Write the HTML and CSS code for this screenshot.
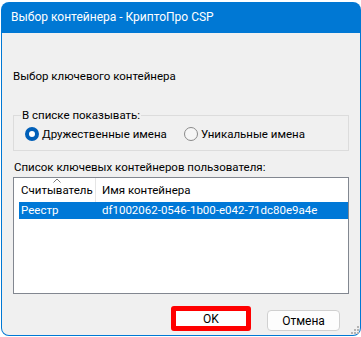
FILE: index.html
```html
<!DOCTYPE html>
<html lang="ru">
<head>
    <meta charset="UTF-8">
    <title>Выбор контейнера - КриптоПро CSP</title>
    <link rel="stylesheet" href="styles.css">
</head>
<body>
    <div class="window">
        <div class="titlebar">Выбор контейнера - КриптоПро CSP</div>
        <div class="client">
            <p class="caption">Выбор ключевого контейнера</p>

            <fieldset class="group">
                <legend>В списке показывать:</legend>
                <div class="radios">
                    <label class="radio radio-first"><span class="dot checked"></span>Дружественные имена</label>
                    <label class="radio"><span class="dot"></span>Уникальные имена</label>
                </div>
            </fieldset>

            <p class="list-label">Список ключевых контейнеров пользователя:</p>
            <div class="listview">
                <div class="lv-header">
                    <div class="col col-reader">
                        <svg class="sort" width="8" height="5" viewBox="0 0 8 5"><path d="M0.5 4.5 L4 1 L7.5 4.5" fill="none" stroke="#7a7a7a" stroke-width="1"/></svg>
                        Считыватель
                    </div>
                    <div class="col col-name">Имя контейнера</div>
                </div>
                <div class="lv-row selected">
                    <div class="col col-reader">Реестр</div>
                    <div class="col col-name">df1002062-0546-1b00-e042-71dc80e9a4e</div>
                </div>
            </div>

            <div class="buttons">
                <button class="btn btn-ok">OK</button>
                <button class="btn">Отмена</button>
            </div>

            <svg class="grip" width="9" height="9" viewBox="0 0 9 9">
                <rect x="7" y="1" width="2" height="2" fill="#b4b4b4"/>
                <rect x="4" y="4" width="2" height="2" fill="#b4b4b4"/>
                <rect x="7" y="4" width="2" height="2" fill="#b4b4b4"/>
                <rect x="1" y="7" width="2" height="2" fill="#b4b4b4"/>
                <rect x="4" y="7" width="2" height="2" fill="#b4b4b4"/>
                <rect x="7" y="7" width="2" height="2" fill="#b4b4b4"/>
            </svg>
        </div>
    </div>
</body>
</html>
```

FILE: styles.css
```css
body {
    margin: 0;
    background-color: #ffffff;
    font-family: Roboto, "Noto Sans", sans-serif;
    font-size: 11.5px;
    line-height: 16px;
    color: #000;
}

.window {
    margin: 2px 0 0 1px;
    width: 360px;
    height: 334px;
    background-color: #0078d4;
    border-radius: 8px;
    display: flex;
    flex-direction: column;
    overflow: hidden;
}

.titlebar {
    height: 31px;
    padding-left: 10px;
    font-size: 12px;
    line-height: 30px;
    color: #fff;
    flex-shrink: 0;
}

.client {
    position: relative;
    flex: 1;
    margin: 0 1px 1px 1px;
    padding: 0 11px;
    background-color: #f0f0f0;
    border-radius: 0 0 7px 7px;
    display: flex;
    flex-direction: column;
}

.caption {
    margin: 35px 0 0 0;
}

.group {
    margin: 23px 0 0 0;
    padding: 3px 0 8px 8px;
    border: 1px solid #dcdcdc;
}

.group legend {
    padding: 0 1px;
    margin-left: -1px;
}

.radios {
    display: flex;
}

.radio {
    flex: none;
    display: flex;
    align-items: center;
    gap: 3px;
}

.radio-first {
    width: 159px;
    margin-left: 3px;
}

.dot {
    box-sizing: border-box;
    width: 14px;
    height: 14px;
    border-radius: 50%;
    border: 1px solid #8a8a8a;
    background-color: #f6f6f6;
}

.dot.checked {
    border: 4px solid #005fb8;
    background-color: #fff;
}

.list-label {
    margin: 8px 0 0 1px;
}

.listview {
    margin-top: 2px;
    height: 115px;
    border: 1px solid #828790;
    background-color: #fff;
    padding-left: 5px;
}

.lv-header,
.lv-row {
    display: flex;
}

.lv-header {
    height: 24px;
    align-items: center;
}

.lv-header .col-reader {
    position: relative;
    align-self: stretch;
    display: flex;
    align-items: center;
    border-right: 1px solid #e5e5e5;
}

.sort {
    position: absolute;
    top: 0;
    left: 34px;
}

.col-reader {
    box-sizing: border-box;
    flex: none;
    width: 77px;
    padding-left: 2px;
    white-space: nowrap;
}

.col-name {
    padding-left: 6px;
}

.lv-row {
    height: 17px;
    line-height: 17px;
}

.lv-row.selected {
    background-color: #0078d7;
    color: #fff;
}

.buttons {
    margin-top: auto;
    margin-bottom: 4px;
    margin-right: 9px;
    display: flex;
    justify-content: flex-end;
    align-items: flex-end;
    gap: 16px;
}

.btn {
    font-family: inherit;
    font-size: 12px;
    color: #000;
    background-color: #fdfdfd;
    border: 1px solid #d0d0d0;
    border-radius: 4px;
    width: 73px;
    height: 21px;
    padding: 0;
}

.btn-ok {
    width: 80px;
    height: 25px;
    background-color: #fff;
    border: 5px solid #ff0000;
    border-radius: 3px;
}

.grip {
    position: absolute;
    right: 1px;
    bottom: 1px;
}
```
